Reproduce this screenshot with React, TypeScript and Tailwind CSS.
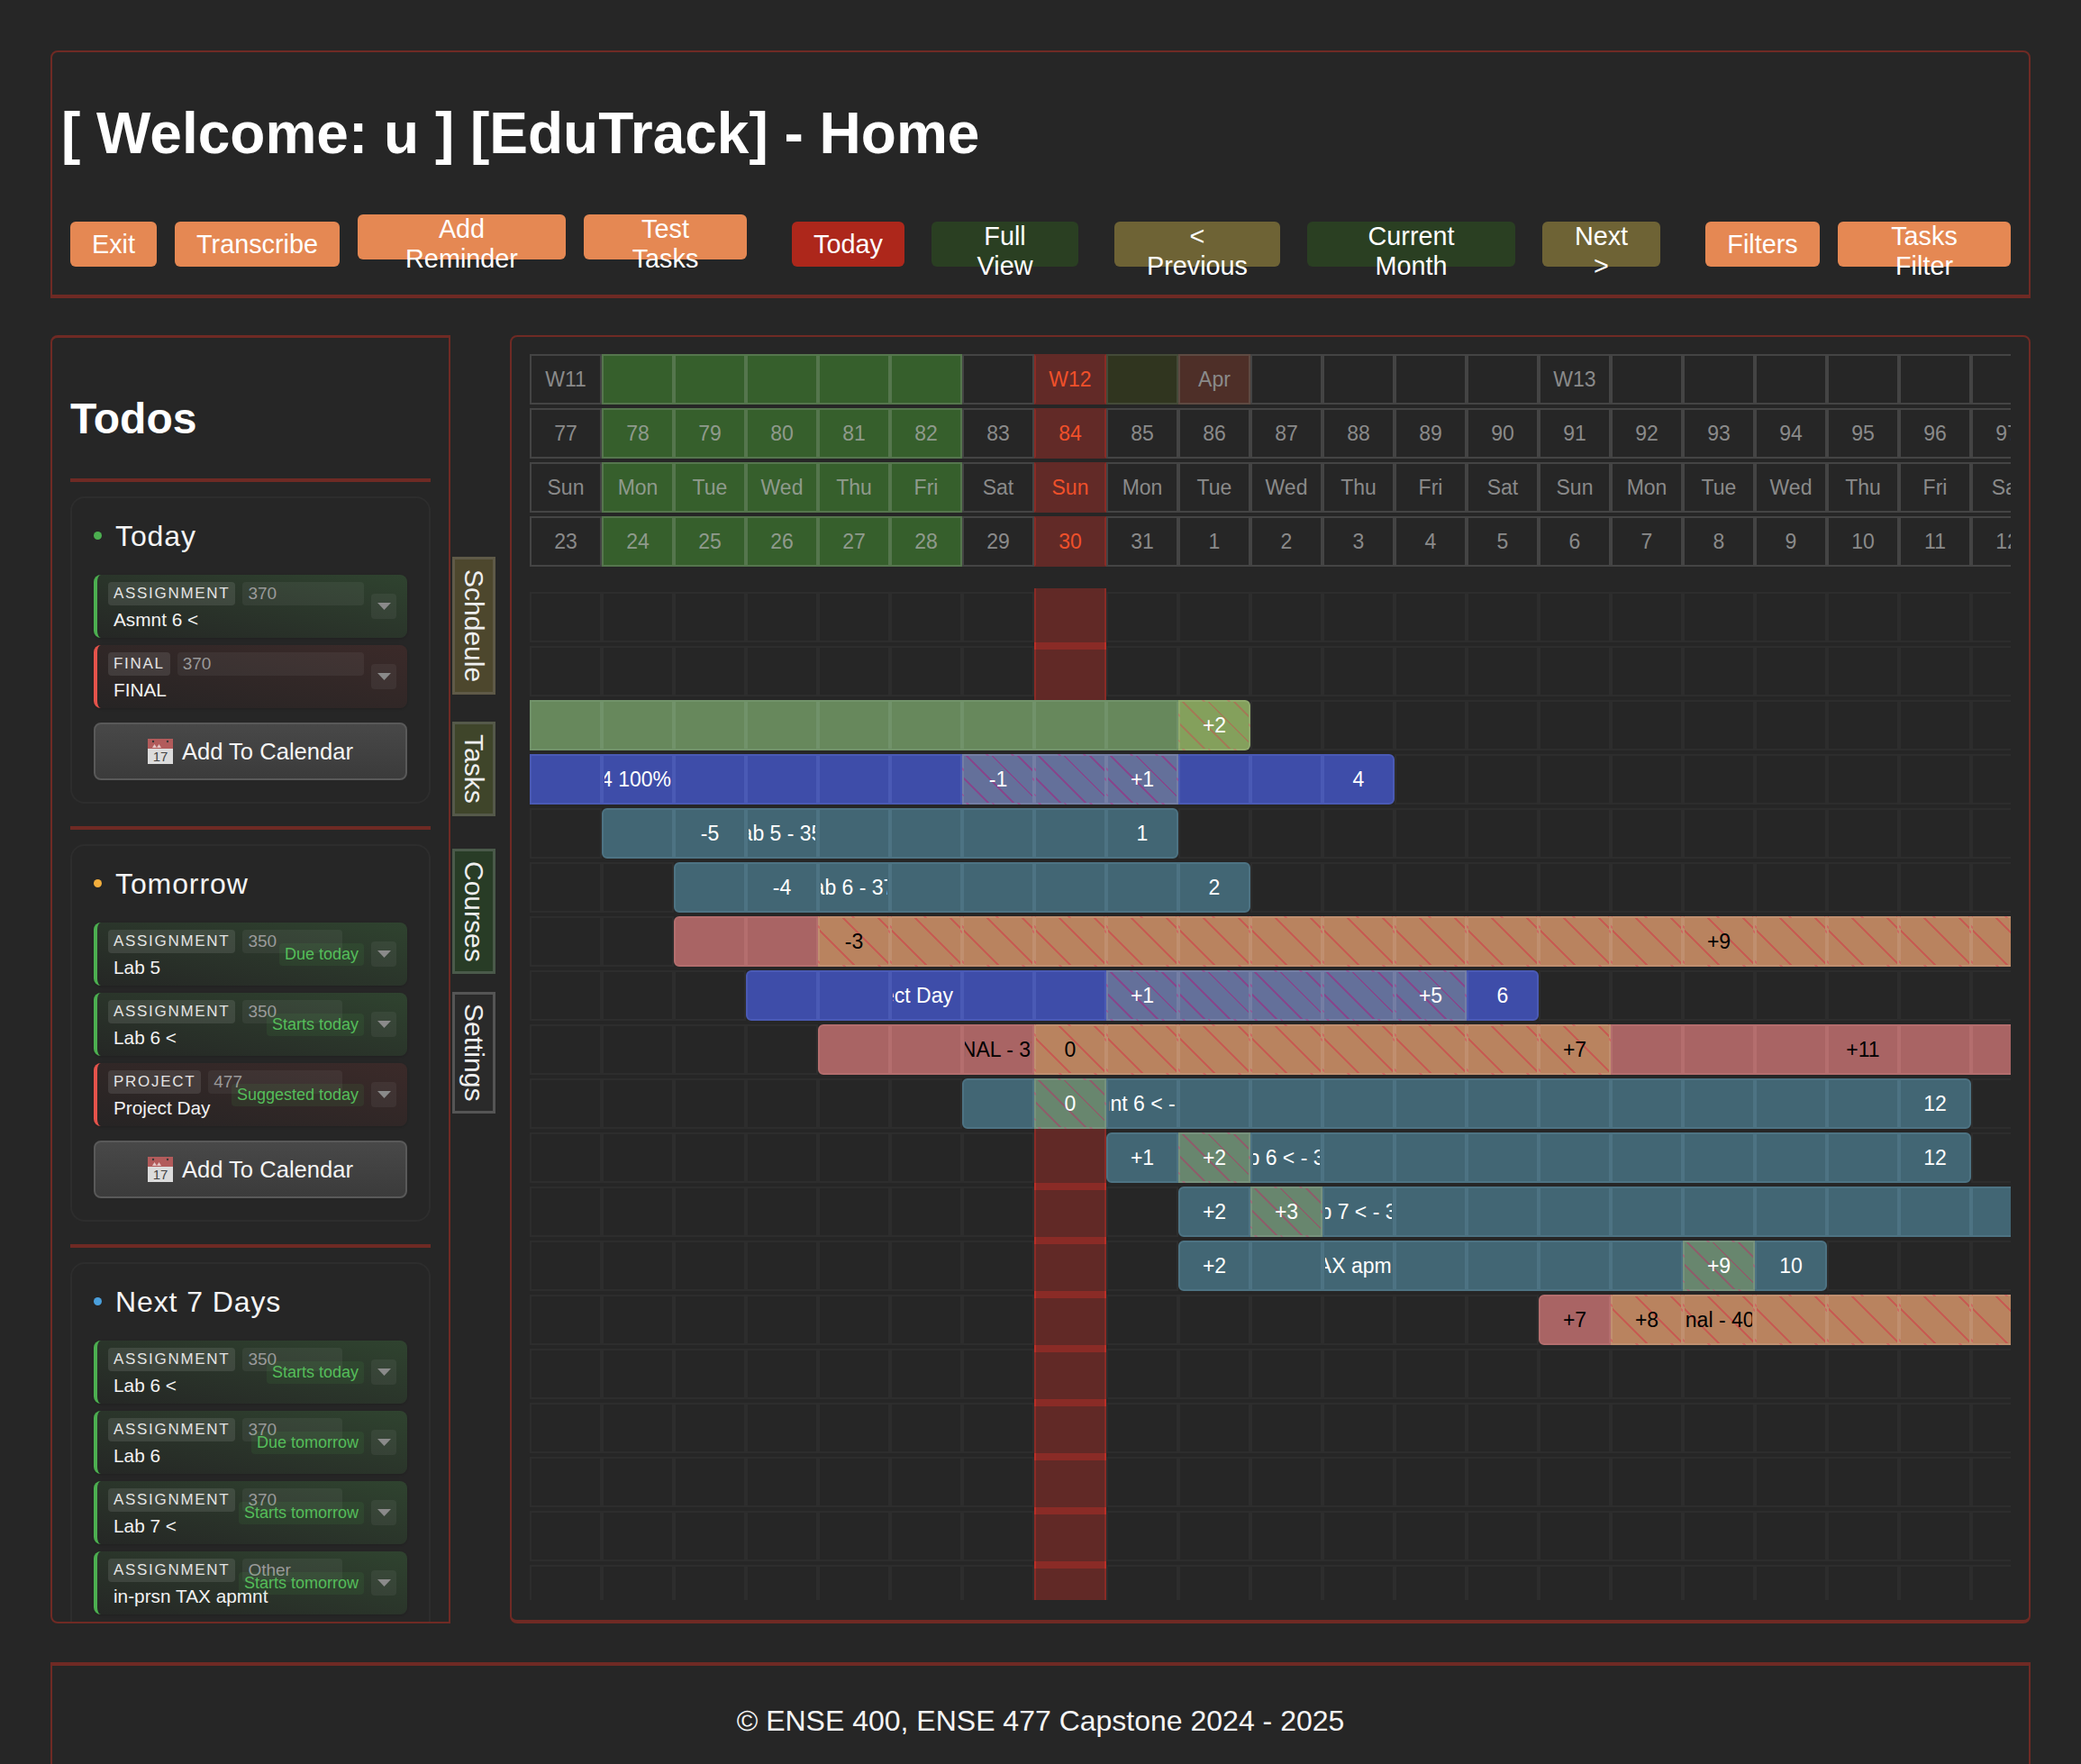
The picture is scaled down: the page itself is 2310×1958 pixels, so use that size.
import React from "react";

type BarKind = "green" | "blue" | "teal" | "pink" | "hGreen" | "hBlue" | "hTeal" | "hOrange";

type Bar = {
  start: number;
  end: number;
  segs: [number, number, BarKind][];
  labels: Record<number, string>;
  rightAlign?: number;
  nudge?: number;
};

const barStyles: Record<BarKind, string> = {
  green: "bg-[#67885c] border-[#71926a] text-white",
  blue: "bg-[#3e4da9] border-[#4a5ab5] text-white",
  teal: "bg-[#426674] border-[#4d7383] text-white",
  pink: "bg-[#a96464] border-[#b46e6e] text-black",
  hGreen:
    "bg-[#84a05c] bg-[repeating-linear-gradient(45deg,transparent,transparent_18px,#a27c56_18px,#a27c56_20px)] border-white/10 text-white",
  hBlue:
    "bg-[#64709a] bg-[repeating-linear-gradient(45deg,transparent,transparent_18px,#85478c_18px,#85478c_20px)] border-white/10 text-white",
  hTeal:
    "bg-[#68866e] bg-[repeating-linear-gradient(45deg,transparent,transparent_18px,#8c5f6a_18px,#8c5f6a_20px)] border-white/10 text-white",
  hOrange:
    "bg-[#b9835f] bg-[repeating-linear-gradient(45deg,transparent,transparent_26px,#c65c52_26px,#c65c52_28px)] border-white/10 text-black",
};

const bars: (Bar | null)[] = [
  null,
  null,
  { start: 0, end: 10, segs: [[0, 9, "green"], [9, 10, "hGreen"]], labels: { 9: "+2" } },
  {
    start: 0,
    end: 12,
    segs: [[0, 6, "blue"], [6, 9, "hBlue"], [9, 12, "blue"]],
    labels: { 1: "Phase 4 100%", 6: "-1", 8: "+1", 11: "4" },
    rightAlign: 1,
  },
  { start: 1, end: 9, segs: [[1, 9, "teal"]], labels: { 2: "-5", 3: "Lab 5 - 350", 8: "1" } },
  { start: 2, end: 10, segs: [[2, 10, "teal"]], labels: { 3: "-4", 4: "Lab 6 - 370", 9: "2" } },
  { start: 2, end: 22, segs: [[2, 4, "pink"], [4, 22, "hOrange"]], labels: { 4: "-3", 16: "+9" } },
  {
    start: 3,
    end: 14,
    segs: [[3, 8, "blue"], [8, 13, "hBlue"], [13, 14, "blue"]],
    labels: { 5: "Project Day", 8: "+1", 12: "+5", 13: "6" },
    rightAlign: 5,
  },
  {
    start: 4,
    end: 22,
    segs: [[4, 7, "pink"], [7, 15, "hOrange"], [15, 22, "pink"]],
    labels: { 6: "FINAL - 370", 7: "0", 14: "+7", 18: "+11" },
  },
  {
    start: 6,
    end: 20,
    segs: [[6, 7, "teal"], [7, 8, "hTeal"], [8, 20, "teal"]],
    labels: { 7: "0", 8: "Asmnt 6 < - 370", 19: "12" },
  },
  {
    start: 8,
    end: 20,
    segs: [[8, 9, "teal"], [9, 10, "hTeal"], [10, 20, "teal"]],
    labels: { 8: "+1", 9: "+2", 10: "Lab 6 < - 350", 19: "12" },
  },
  {
    start: 9,
    end: 22,
    segs: [[9, 10, "teal"], [10, 11, "hTeal"], [11, 22, "teal"]],
    labels: { 9: "+2", 10: "+3", 11: "Lab 7 < - 370" },
  },
  {
    start: 9,
    end: 18,
    segs: [[9, 16, "teal"], [16, 17, "hTeal"], [17, 18, "teal"]],
    labels: { 9: "+2", 11: "in-prsn TAX apmnt - Other", 16: "+9", 17: "10" },
  },
  {
    start: 14,
    end: 22,
    segs: [[14, 15, "pink"], [15, 22, "hOrange"]],
    labels: { 14: "+7", 15: "+8", 16: "Final - 400" },
    nudge: 16,
  },
  null,
  null,
  null,
  null,
  null,
];

const COLS = Array.from({ length: 22 }, (_, i) => i);
const DAYS = ["Sun", "Mon", "Tue", "Wed", "Thu", "Fri", "Sat"];
const WEEKS: Record<number, string> = { 0: "W11", 7: "W12", 9: "Apr", 14: "W13" };

function headClass(col: number, row: number) {
  if (col === 7) return "bg-[#622a27] border-x-[#8a2b25] border-y-[#622a27] text-[#f0502a]";
  if (col >= 1 && col <= 5) return "bg-[#365f2c] border-[#55764d] text-[#8f9a8c]";
  if (row === 0 && col === 8) return "bg-[#30351f] border-[#444a38] text-[#8a8a8a]";
  if (row === 0 && col === 9) return "bg-[#4e2f28] border-[#5e4a42] text-[#8a8a8a]";
  return "border-[#444444] text-[#8a8a8a]";
}

function headText(col: number, row: number) {
  if (row === 0) return WEEKS[col] ?? "";
  if (row === 1) return String(77 + col);
  if (row === 2) return DAYS[col % 7];
  const d = 23 + col;
  return String(d > 31 ? d - 31 : d);
}

function GanttHead() {
  return (
    <div className="flex flex-col gap-1">
      {[0, 1, 2, 3].map((row) => (
        <div key={row} className="flex">
          {COLS.map((col) => (
            <div
              key={col}
              className={`w-[80px] h-[56px] shrink-0 border-2 flex items-center justify-center text-[23px] ${headClass(col, row)}`}
            >
              {headText(col, row)}
            </div>
          ))}
        </div>
      ))}
    </div>
  );
}

function EmptyCell({ col }: { col: number }) {
  if (col === 7) {
    return (
      <div className="relative w-[80px] h-[56px] shrink-0">
        <div className="absolute inset-x-0 -top-[4px] h-[68px] bg-[#ea3127]/30 border-x-2 border-[#ea3127]/30" />
      </div>
    );
  }
  return <div className="w-[80px] h-[56px] shrink-0 border-2 border-[#2d2d2d]" />;
}

function BarCell({ bar, col }: { bar: Bar; col: number }) {
  const seg = bar.segs.find((s) => col >= s[0] && col < s[1]);
  const kind = seg ? seg[2] : "teal";
  const first = col === bar.start && bar.start > 0;
  const last = col === bar.end - 1;
  const right = bar.rightAlign === col;
  return (
    <div
      className={`relative z-10 w-[80px] h-[56px] shrink-0 border-2 px-[1px] flex text-[23px] ${barStyles[kind]} ${
        first ? "rounded-l-[6px]" : ""
      } ${last ? "rounded-r-[6px]" : ""}`}
    >
      <div
        className={`w-full overflow-hidden flex items-center whitespace-nowrap ${
          right ? (col === 5 ? "justify-end pr-[7px]" : "justify-end") : "justify-center"
        }`}
      >
        <span className={`shrink-0 ${bar.nudge === col ? "-translate-x-[2px]" : ""}`}>{bar.labels[col]}</span>
      </div>
    </div>
  );
}

function GanttBody() {
  return (
    <div className="mt-[28px] flex flex-col gap-1">
      {bars.map((bar, i) => (
        <div key={i} className="flex">
          {COLS.map((col) =>
            bar && col >= bar.start && col < bar.end ? (
              <BarCell key={col} bar={bar} col={col} />
            ) : (
              <EmptyCell key={col} col={col} />
            ),
          )}
        </div>
      ))}
    </div>
  );
}

type Todo = {
  type: string;
  course: string;
  title: string;
  tone: "green" | "red";
  due?: string;
};

function CalendarIcon() {
  return (
    <svg width="28" height="28" viewBox="0 0 28 28" className="shrink-0">
      <rect x="0" y="0" width="28" height="28" fill="#dcdcdc" />
      <rect x="0" y="0" width="28" height="11" fill="#b25b5b" />
      <circle cx="6" cy="3" r="1.2" fill="#3a3a3a" />
      <circle cx="22" cy="3" r="1.2" fill="#3a3a3a" />
      <path d="M5 10l2.5-4 2.5 4zM10 10l2.5-4 2.5 4z" fill="#e3c4c4" />
      <text x="14" y="25" textAnchor="middle" fontSize="15" fill="#444444" fontFamily="Liberation Sans">
        17
      </text>
    </svg>
  );
}

function TodoRow({ todo }: { todo: Todo }) {
  const tone =
    todo.tone === "green"
      ? "border-[#4caf50] from-[#252725] to-[#2f432f]"
      : "border-[#e5534b] from-[#262424] to-[#3b2a29]";
  return (
    <div className={`relative flex items-center h-[70px] shrink-0 border-l-4 rounded-[8px] pl-[12px] pr-[12px] gap-2 bg-gradient-to-tr shadow-sm ${tone}`}>
      <div className="flex-1 min-w-0 self-start pt-2">
        <div className={`flex gap-2 ${todo.due ? "mr-[24px]" : ""}`}>
          <span className="h-[26px] px-[6px] rounded-[4px] bg-white/10 text-[#e4e4e4] text-[17px] leading-[25px] tracking-[1.7px] shrink-0">
            {todo.type}
          </span>
          <span className="flex-1 h-[26px] px-[6px] rounded-[4px] bg-white/5 text-[#9a9a9a] text-[19px] leading-[26px]">
            {todo.course}
          </span>
        </div>
        <div className="mt-1 pl-[6px] text-[20.8px] leading-[23px] text-[#f2f2f2] whitespace-nowrap">{todo.title}</div>
      </div>
      <div className="w-[28px] h-[28px] shrink-0 rounded-[4px] bg-white/5 flex items-center justify-center">
        <svg width="15" height="8" viewBox="0 0 15 8">
          <polygon points="0,0 15,0 7.5,8" fill="#8a8a8a" />
        </svg>
      </div>
      {todo.due && (
        <span className="absolute right-[48px] top-[23px] h-[25px] px-[6px] rounded-[4px] bg-[#4caf50]/10 text-[#55bd5a] text-[18px] leading-[24px] whitespace-nowrap">
          {todo.due}
        </span>
      )}
    </div>
  );
}

function TodoCard({ title, dot, todos, calendar }: { title: string; dot: string; todos: Todo[]; calendar?: boolean }) {
  return (
    <section className="shrink-0 border-2 border-[#2d2d2d] rounded-[16px] px-[24px] pb-[24px]">
      <div className="h-[37px] mt-[23px] mb-[25px] flex items-center gap-[15px]">
        <span className={`w-[9px] h-[9px] rounded-full ${dot}`} />
        <h3 className="text-[32px] tracking-[0.9px] font-normal text-[#f4f4f4] whitespace-nowrap">{title}</h3>
      </div>
      <div className="flex flex-col gap-2">
        {todos.map((t, i) => (
          <TodoRow key={i} todo={t} />
        ))}
      </div>
      {calendar && (
        <button className="mt-4 w-full h-[64px] flex items-center justify-center gap-[10px] rounded-[8px] border-2 border-[#595959] bg-gradient-to-b from-[#484848] to-[#3b3b3b] text-[25.6px] text-[#f4f4f4]">
          <CalendarIcon />
          <span>Add To Calendar</span>
        </button>
      )}
    </section>
  );
}

function Divider() {
  return <div className="h-[4px] shrink-0 bg-[#6f2a24]" />;
}

const headerButtons = [
  { label: "Exit", w: "w-[96px]", mt: "mt-2", ml: "", bg: "bg-[#e58853]" },
  { label: "Transcribe", w: "w-[183px]", mt: "mt-2", ml: "ml-5", bg: "bg-[#e58853]" },
  { label: "Add\nReminder", w: "w-[231px]", mt: "", ml: "ml-5", bg: "bg-[#e58853]" },
  { label: "Test\nTasks", w: "w-[181px]", mt: "", ml: "ml-5", bg: "bg-[#e58853]" },
  { label: "Today", w: "w-[125px]", mt: "mt-2", ml: "ml-[50px]", bg: "bg-[#ad271b]" },
  { label: "Full\nView", w: "w-[163px]", mt: "mt-2", ml: "ml-[30px]", bg: "bg-[#2a3f22]" },
  { label: "<\nPrevious", w: "w-[184px]", mt: "mt-2", ml: "ml-10", bg: "bg-[#6e6335]" },
  { label: "Current\nMonth", w: "w-[231px]", mt: "mt-2", ml: "ml-[30px]", bg: "bg-[#2a3f22]" },
  { label: "Next\n>", w: "w-[131px]", mt: "mt-2", ml: "ml-[30px]", bg: "bg-[#6e6335]" },
  { label: "Filters", w: "w-[127px]", mt: "mt-2", ml: "ml-[50px]", bg: "bg-[#e58853]" },
  { label: "Tasks\nFilter", w: "w-[192px]", mt: "mt-2", ml: "ml-5", bg: "bg-[#e58853]" },
];

const sideTabs = [
  { label: "Schdeule", cls: "h-[153px] bg-[#4d472d] border-[#5f5a48]" },
  { label: "Tasks", cls: "h-[105px] mt-[30px] bg-[#3f452a] border-[#55594a]" },
  { label: "Courses", cls: "h-[139px] mt-[36px] bg-[#283c26] border-[#4a5a4a]" },
  { label: "Settings", cls: "h-[135px] mt-5 bg-[#2a2a2a] border-[#555555]" },
];

const today: Todo[] = [
  { type: "ASSIGNMENT", course: "370", title: "Asmnt 6 <", tone: "green" },
  { type: "FINAL", course: "370", title: "FINAL", tone: "red" },
];

const tomorrow: Todo[] = [
  { type: "ASSIGNMENT", course: "350", title: "Lab 5", tone: "green", due: "Due today" },
  { type: "ASSIGNMENT", course: "350", title: "Lab 6 <", tone: "green", due: "Starts today" },
  { type: "PROJECT", course: "477", title: "Project Day", tone: "red", due: "Suggested today" },
];

const nextWeek: Todo[] = [
  { type: "ASSIGNMENT", course: "350", title: "Lab 6 <", tone: "green", due: "Starts today" },
  { type: "ASSIGNMENT", course: "370", title: "Lab 6", tone: "green", due: "Due tomorrow" },
  { type: "ASSIGNMENT", course: "370", title: "Lab 7 <", tone: "green", due: "Starts tomorrow" },
  { type: "ASSIGNMENT", course: "Other", title: "in-prsn TAX apmnt", tone: "green", due: "Starts tomorrow" },
];

export default function App() {
  return (
    <div className="h-[1958px] overflow-hidden bg-[#262626] px-[56px] pt-[56px] text-white font-['Liberation_Sans',Arial,sans-serif]">
      <header className="h-[275px] border-2 border-b-4 border-[#6f2a24] rounded-t-[8px] pl-[20px]">
        <h1 className="-ml-[10px] pt-[53px] text-[64px] leading-[74px] font-bold whitespace-nowrap">
          [ Welcome: u ] [EduTrack] - Home
        </h1>
        <div className="mt-[53px] flex items-start">
          {headerButtons.map((b) => (
            <button
              key={b.label}
              className={`h-[50px] shrink-0 rounded-[6px] text-[28.8px] leading-[33px] text-white whitespace-pre-line ${b.w} ${b.mt} ${b.ml} ${b.bg}`}
            >
              {b.label}
            </button>
          ))}
        </div>
      </header>

      <div className="mt-[41px] h-[1430px] flex">
        <aside className="w-[444px] shrink-0 h-full overflow-hidden border-2 border-t-[3px] border-[#6f2a24] rounded-l-[8px] px-[20px] flex flex-col">
          <h2 className="pt-[62px] text-[48px] leading-[55px] font-bold mb-[39px]">Todos</h2>
          <Divider />
          <div className="mt-4">
            <TodoCard title="Today" dot="bg-[#4caf50]" todos={today} calendar />
          </div>
          <div className="mt-[25px]">
            <Divider />
          </div>
          <div className="mt-4">
            <TodoCard title="Tomorrow" dot="bg-[#f2ae3d]" todos={tomorrow} calendar />
          </div>
          <div className="mt-[25px]">
            <Divider />
          </div>
          <div className="mt-4">
            <TodoCard title="Next 7 Days" dot="bg-[#4a9fdc]" todos={nextWeek} />
          </div>
        </aside>

        <nav className="ml-[2px] w-[48px] shrink-0 pt-[246px] flex flex-col">
          {sideTabs.map((t) => (
            <div
              key={t.label}
              className={`w-[48px] border-[3px] flex items-center justify-center text-[30px] text-[#eeeeee] [writing-mode:vertical-rl] ${t.cls}`}
            >
              {t.label}
            </div>
          ))}
        </nav>

        <main className="ml-[16px] flex-1 min-w-0 h-full border-2 border-t-[2px] border-b-4 border-[#6f2a24] rounded-[8px] pl-[20px] pr-[20px] pt-[19px]">
          <div className="h-[1383px] overflow-hidden">
            <GanttHead />
            <GanttBody />
          </div>
        </main>
      </div>

      <footer className="mt-[43px] h-[200px] border-2 border-t-4 border-[#6f2a24] pt-[43px] text-center text-[32px] leading-[37px] text-[#f4f4f4]">
        © ENSE 400, ENSE 477 Capstone 2024 - 2025
      </footer>
    </div>
  );
}
